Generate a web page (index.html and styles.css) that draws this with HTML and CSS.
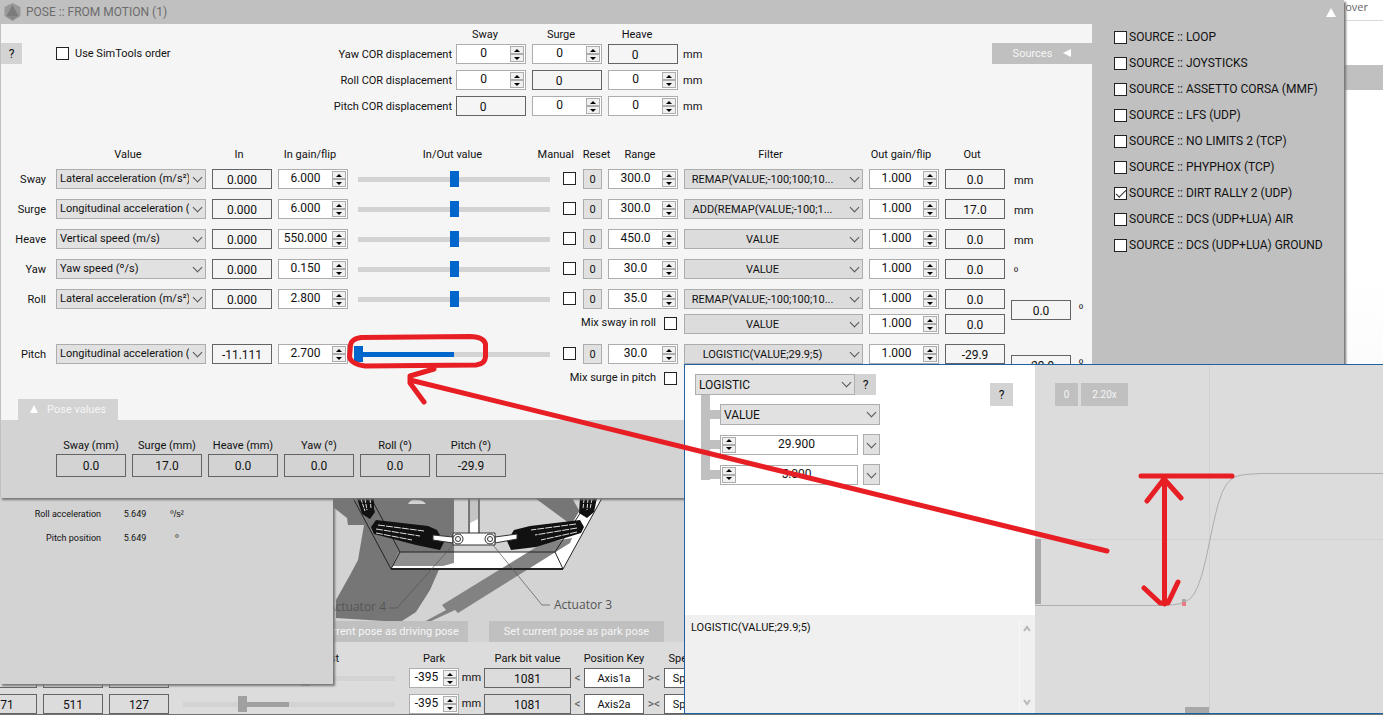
FILE: index.html
```
<!DOCTYPE html>
<html lang="en">
<head>
<meta charset="utf-8">
<title>Pose from motion</title>
<link rel="stylesheet" href="styles.css">
</head>
<body>
<main class="desktop">

  <div class="backdrop"><div class="backdrop-tab">over</div><div class="backdrop-band"></div></div>

  <section class="rig">
    <svg class="rig-view" viewBox="333 498 352 144" aria-label="Rig view">
      <path fill="#767676" d="M367 498H454V562L441 565 430 590 416 612 402 621H384L336 618V600L350 575 358 560 364 525H348L347 518 333 507V498Z"/>
      <path fill="#d3d3d3" d="M408 504q3-6 10-4 5 0 8 4z"/>
      <path fill="#767676" d="M535 498H572L584 519 573 526Z"/>
      <path fill="#fff" d="M400 552H555L602 473V498L563 569H391Z"/>
      <path fill="#8f8f8f" d="M398 552H454V563L443 566H392Z"/>
      <path fill="#828282" d="M543 543L572 538 570 543 458 613 455 610 427 623H422L446 610 442 605Z"/>
      <g fill="none" stroke="#222" stroke-width="1"><path d="M353 498L391 569 400 552 371 498M400 552H555L590 498M555 552L563 569M602 498L563 569"/><path stroke-width="2" d="M391 569H563"/></g>
      <path fill="#c4c4c4" stroke="#222" d="M469 498V534H479V498"/><path d="M470 523l8-4v15h-8z" fill="#fff"/>
      <path fill="#111" d="M357 498H374V509L375 512 370 519 362 514ZM580 498H597L594 512 587 518 579 513Z"/>
      <path stroke="#ddd" stroke-dasharray="4 1" d="M361 499l4 12M365 499l2 11M370 499l1 9M584 499l-1 10M588 499l-1 11M592 499l-2 10"/>
      <path fill="#111" d="M376 520L428 526 437 530 444 542 440 550 416 545 374 534 371 527ZM580 520L530 526 514 530 507 541 511 550 536 547 581 533 584 527Z"/>
      <g stroke="#ddd" fill="none" stroke-dasharray="7 1"><path d="M378 525l46 6M376 529l44 7M376 533l36 7"/><path d="M576 524l-45 6M577 528l-42 7M577 532l-36 8"/></g>
      <g stroke="#333" stroke-width="1" fill="#fff"><path d="M433 535l20 2v6l-20-3zM517 534l-22 3v6l22-4z"/><path d="M453 533h42v12h-42z"/><circle cx="458" cy="539" r="5"/><circle cx="490" cy="539" r="5"/><circle cx="458" cy="539" r="2.5"/><circle cx="490" cy="539" r="2.5"/></g>
      <path d="M453 545L397 608H389M493 545L542 605H550" fill="none" stroke="#555" stroke-width=".7"/>
      <text x="386" y="611" text-anchor="end" class="rig-label">Actuator 4</text>
      <text x="554" y="609" class="rig-label">Actuator 3</text>
    </svg>
    <div class="rig-actions"><button>Set current pose as driving pose</button><button>Set current pose as park pose</button></div>
    <div class="axis-grid">
      <span></span><span></span><span></span><span class="test-head">Test</span><span>Park</span><span></span><span>Park bit value</span><span></span><span>Position Key</span><span></span><span>Speed Key</span>

      <output class="box"></output><output class="box"></output><output class="box"></output>
      <input class="test-slider" type="range" value="58" aria-label="Axis 1 test">
      <span class="spin"><input value="-395" aria-label="Axis 1 park"><span class="ud"><button aria-label="Up"></button><button aria-label="Down"></button></span></span><span>mm</span>
      <output class="box">1081</output><span class="mark">&lt;</span><input class="key" value="Axis1a" aria-label="Axis 1 key"><span class="mark">&gt;&lt;</span><input class="key" value="Speed1a" aria-label="Axis 1 speed">

      <output class="box">71</output><output class="box">511</output><output class="box">127</output>
      <input class="test-slider filled" type="range" value="27" aria-label="Axis 2 test">
      <span class="spin"><input value="-395" aria-label="Axis 2 park"><span class="ud"><button aria-label="Up"></button><button aria-label="Down"></button></span></span><span>mm</span>
      <output class="box">1081</output><span class="mark">&lt;</span><input class="key" value="Axis2a" aria-label="Axis 2 key"><span class="mark">&gt;&lt;</span><input class="key" value="Speed2a" aria-label="Axis 2 speed">
    </div>
  </section>

  <section class="telemetry">
    <span>Roll acceleration</span><span>5.649</span><span class="deg">º/s²</span>
    <span>Pitch position</span><span>5.649</span><span class="deg">º</span>
  </section>

  <section class="window">
    <header class="titlebar">
      <svg class="logo" viewBox="0 0 16 18"><path fill="#989898" d="M8 0l8 4v9l-8 5-8-5V4z"/><path fill="#7b7b7b" d="M8 2l6 11H2z"/><path fill="#888" d="M2 13h12l-6 4z"/></svg>
      <h1>POSE :: FROM MOTION (1)</h1>
      <button class="collapse" aria-label="Collapse"><svg viewBox="0 0 10 9"><path fill="#fff" d="M5 0l5 9H0z"/></svg></button>
    </header>
    <div class="window-body">
      <div class="form">
        <div class="top">
          <button class="help">?</button>
          <label class="order"><input type="checkbox">Use SimTools order</label>
          <div class="cor">
            <span></span><b>Sway</b><b>Surge</b><b>Heave</b><span></span>
            <span>Yaw COR displacement</span>
            <span class="spin"><input value="0" aria-label="Yaw sway"><span class="ud"><button aria-label="Up"></button><button aria-label="Down"></button></span></span>
            <span class="spin"><input value="0" aria-label="Yaw surge"><span class="ud"><button aria-label="Up"></button><button aria-label="Down"></button></span></span>
            <output class="box">0</output><span>mm</span>
            <span>Roll COR displacement</span>
            <span class="spin"><input value="0" aria-label="Roll sway"><span class="ud"><button aria-label="Up"></button><button aria-label="Down"></button></span></span>
            <output class="box">0</output>
            <span class="spin"><input value="0" aria-label="Roll heave"><span class="ud"><button aria-label="Up"></button><button aria-label="Down"></button></span></span><span>mm</span>
            <span>Pitch COR displacement</span>
            <output class="box">0</output>
            <span class="spin"><input value="0" aria-label="Pitch surge"><span class="ud"><button aria-label="Up"></button><button aria-label="Down"></button></span></span>
            <span class="spin"><input value="0" aria-label="Pitch heave"><span class="ud"><button aria-label="Up"></button><button aria-label="Down"></button></span></span><span>mm</span>
          </div>
          <button class="sources-toggle">Sources<svg viewBox="0 0 8 8"><path fill="#fff" d="M8 0v8L0 4z"/></svg></button>
        </div>

        <div class="motion">
          <b></b><b>Value</b><b>In</b><b>In gain/flip</b><b>In/Out value</b><b class="manual">Manual</b><b class="reset-head">Reset</b><b>Range</b><b>Filter</b><b>Out gain/flip</b><b>Out</b><b></b><b></b>

          <span class="name">Sway</span>
          <span class="sel"><select aria-label="Sway value"><option>Lateral acceleration (m/s²)</option></select></span>
          <output class="box">0.000</output>
          <span class="spin"><input value="6.000" aria-label="Sway in gain"><span class="ud"><button aria-label="Up"></button><button aria-label="Down"></button></span></span>
          <input type="range" class="slider" aria-label="Sway in/out">
          <input type="checkbox" aria-label="Sway manual"><button class="reset">0</button>
          <span class="spin"><input value="300.0" aria-label="Sway range"><span class="ud"><button aria-label="Up"></button><button aria-label="Down"></button></span></span>
          <span class="sel filter"><select aria-label="Sway filter"><option>REMAP(VALUE;-100;100;10...</option></select></span>
          <span class="spin"><input value="1.000" aria-label="Sway out gain"><span class="ud"><button aria-label="Up"></button><button aria-label="Down"></button></span></span>
          <output class="box">0.0</output><span class="unit">mm</span><span></span>

          <span class="name">Surge</span>
          <span class="sel"><select aria-label="Surge value"><option>Longitudinal acceleration (m/s²)</option></select></span>
          <output class="box">0.000</output>
          <span class="spin"><input value="6.000" aria-label="Surge in gain"><span class="ud"><button aria-label="Up"></button><button aria-label="Down"></button></span></span>
          <input type="range" class="slider" aria-label="Surge in/out">
          <input type="checkbox" aria-label="Surge manual"><button class="reset">0</button>
          <span class="spin"><input value="300.0" aria-label="Surge range"><span class="ud"><button aria-label="Up"></button><button aria-label="Down"></button></span></span>
          <span class="sel filter"><select aria-label="Surge filter"><option>ADD(REMAP(VALUE;-100;1...</option></select></span>
          <span class="spin"><input value="1.000" aria-label="Surge out gain"><span class="ud"><button aria-label="Up"></button><button aria-label="Down"></button></span></span>
          <output class="box">17.0</output><span class="unit">mm</span><span></span>

          <span class="name">Heave</span>
          <span class="sel"><select aria-label="Heave value"><option>Vertical speed (m/s)</option></select></span>
          <output class="box">0.000</output>
          <span class="spin"><input value="550.000" aria-label="Heave in gain"><span class="ud"><button aria-label="Up"></button><button aria-label="Down"></button></span></span>
          <input type="range" class="slider" aria-label="Heave in/out">
          <input type="checkbox" aria-label="Heave manual"><button class="reset">0</button>
          <span class="spin"><input value="450.0" aria-label="Heave range"><span class="ud"><button aria-label="Up"></button><button aria-label="Down"></button></span></span>
          <span class="sel filter"><select aria-label="Heave filter"><option>VALUE</option></select></span>
          <span class="spin"><input value="1.000" aria-label="Heave out gain"><span class="ud"><button aria-label="Up"></button><button aria-label="Down"></button></span></span>
          <output class="box">0.0</output><span class="unit">mm</span><span></span>

          <span class="name">Yaw</span>
          <span class="sel"><select aria-label="Yaw value"><option>Yaw speed (º/s)</option></select></span>
          <output class="box">0.000</output>
          <span class="spin"><input value="0.150" aria-label="Yaw in gain"><span class="ud"><button aria-label="Up"></button><button aria-label="Down"></button></span></span>
          <input type="range" class="slider" aria-label="Yaw in/out">
          <input type="checkbox" aria-label="Yaw manual"><button class="reset">0</button>
          <span class="spin"><input value="30.0" aria-label="Yaw range"><span class="ud"><button aria-label="Up"></button><button aria-label="Down"></button></span></span>
          <span class="sel filter"><select aria-label="Yaw filter"><option>VALUE</option></select></span>
          <span class="spin"><input value="1.000" aria-label="Yaw out gain"><span class="ud"><button aria-label="Up"></button><button aria-label="Down"></button></span></span>
          <output class="box">0.0</output><span class="unit deg">º</span><span></span>

          <span class="name">Roll</span>
          <span class="sel"><select aria-label="Roll value"><option>Lateral acceleration (m/s²)</option></select></span>
          <output class="box">0.000</output>
          <span class="spin"><input value="2.800" aria-label="Roll in gain"><span class="ud"><button aria-label="Up"></button><button aria-label="Down"></button></span></span>
          <input type="range" class="slider" aria-label="Roll in/out">
          <input type="checkbox" aria-label="Roll manual"><button class="reset">0</button>
          <span class="spin"><input value="35.0" aria-label="Roll range"><span class="ud"><button aria-label="Up"></button><button aria-label="Down"></button></span></span>
          <span class="sel filter"><select aria-label="Roll filter"><option>REMAP(VALUE;-100;100;10...</option></select></span>
          <span class="spin"><input value="1.000" aria-label="Roll out gain"><span class="ud"><button aria-label="Up"></button><button aria-label="Down"></button></span></span>
          <output class="box">0.0</output><output class="box sum">0.0</output><span class="sum deg">º</span>

          <label class="mix">Mix sway in roll<input type="checkbox"></label>
          <span class="sel filter"><select aria-label="Roll mix filter"><option>VALUE</option></select></span>
          <span class="spin"><input value="1.000" aria-label="Roll mix gain"><span class="ud"><button aria-label="Up"></button><button aria-label="Down"></button></span></span>
          <output class="box">0.0</output>

          <span class="name">Pitch</span>
          <span class="sel"><select aria-label="Pitch value"><option>Longitudinal acceleration (m/s²)</option></select></span>
          <output class="box">-11.111</output>
          <span class="spin"><input value="2.700" aria-label="Pitch in gain"><span class="ud"><button aria-label="Up"></button><button aria-label="Down"></button></span></span>
          <input type="range" class="slider low" value="0" aria-label="Pitch in/out">
          <input type="checkbox" aria-label="Pitch manual"><button class="reset">0</button>
          <span class="spin"><input value="30.0" aria-label="Pitch range"><span class="ud"><button aria-label="Up"></button><button aria-label="Down"></button></span></span>
          <span class="sel filter"><select aria-label="Pitch filter"><option>LOGISTIC(VALUE;29.9;5)</option></select></span>
          <span class="spin"><input value="1.000" aria-label="Pitch out gain"><span class="ud"><button aria-label="Up"></button><button aria-label="Down"></button></span></span>
          <output class="box">-29.9</output><output class="box sum">-29.9</output><span class="sum deg">º</span>

          <label class="mix">Mix surge in pitch<input type="checkbox"></label>
        </div>

        <button class="pose-tab"><svg viewBox="0 0 8 8"><path fill="#fff" d="M4 0l4 8H0z"/></svg>Pose values</button>
        <div class="pose">
          <label>Sway (mm)<output class="box">0.0</output></label>
          <label>Surge (mm)<output class="box">17.0</output></label>
          <label>Heave (mm)<output class="box">0.0</output></label>
          <label>Yaw (º)<output class="box">0.0</output></label>
          <label>Roll (º)<output class="box">0.0</output></label>
          <label>Pitch (º)<output class="box">-29.9</output></label>
        </div>
      </div>
      <div class="sources">
        <label><input type="checkbox">SOURCE :: LOOP</label>
        <label><input type="checkbox">SOURCE :: JOYSTICKS</label>
        <label><input type="checkbox">SOURCE :: ASSETTO CORSA (MMF)</label>
        <label><input type="checkbox">SOURCE :: LFS (UDP)</label>
        <label><input type="checkbox">SOURCE :: NO LIMITS 2 (TCP)</label>
        <label><input type="checkbox">SOURCE :: PHYPHOX (TCP)</label>
        <label><input type="checkbox" checked>SOURCE :: DIRT RALLY 2 (UDP)</label>
        <label><input type="checkbox">SOURCE :: DCS (UDP+LUA) AIR</label>
        <label><input type="checkbox">SOURCE :: DCS (UDP+LUA) GROUND</label>
      </div>
    </div>
  </section>

  <section class="editor">
    <div class="expression">
      <div class="builder">
        <div class="nodes">
          <div class="root"><span class="sel"><select aria-label="Function"><option>LOGISTIC</option></select></span><button class="help">?</button></div>
          <div class="tree">
            <div class="node"><i></i><span class="sel"><select aria-label="Argument 1"><option>VALUE</option></select></span></div>
            <div class="node"><i></i><span class="spin left"><span class="ud"><button aria-label="Up"></button><button aria-label="Down"></button></span><input value="29.900" aria-label="Argument 2"></span><button class="drop" aria-label="Replace argument 2"></button></div>
            <div class="node"><i></i><span class="spin left"><span class="ud"><button aria-label="Up"></button><button aria-label="Down"></button></span><input value="5.000" aria-label="Argument 3"></span><button class="drop" aria-label="Replace argument 3"></button></div>
          </div>
        </div>
        <button class="help large">?</button>
      </div>
      <div class="source-text">
        <textarea aria-label="Expression">LOGISTIC(VALUE;29.9;5)</textarea>
        <svg class="scroll" viewBox="0 0 16 90"><path d="M0 0V90" stroke="#fff"/><path d="M5 11l3-4 3 4M5 80l3 4 3-4" fill="none" stroke="#b8b8b8" stroke-width="2"/></svg>
      </div>
    </div>
    <div class="graph">
      <svg class="plot" viewBox="1035 365 348 348" preserveAspectRatio="xMinYMin slice" aria-label="Logistic curve">
        <path d="M1209.500 365V713M1035 539.500H1383" stroke="#d0d0d0"/>
        <path fill="#a8a8a8" d="M1035 539h6v65h-6zM1185 707h24v6h-24zM1182 599h4v3h-4z"/>
        <polyline fill="none" stroke="#adadad" points="1035,605.500 1160,605.500 1172,605 1180,603.700 1185,602 1190,598.800 1194,594 1198,586 1202,574.500 1206,558.500 1210,539.500 1214,520.500 1218,504.500 1222,492.800 1226,485 1230,480.200 1235,477 1240,475.300 1248,474.300 1262,473.500 1383,473.500"/>
        <path fill="#e87c80" d="M1182 602h4v4h-4z"/>
      </svg>
      <div class="graph-tools"><button>0</button><button>2.20x</button></div>
    </div>
  </section>

  <svg class="ink" viewBox="0 0 1383 715" aria-hidden="true">
    <g fill="none" stroke="#e81e25" stroke-width="5" stroke-linecap="round" stroke-linejoin="round">
      <path d="M361 337.500L470 336.500Q484 337 485.500 344V357Q485 364 476 365L365 366Q351 364 349.500 357L350.500 345Q351 339 361 337.500Z"/>
      <path d="M434 369L410 376V383L424 402M410 380L1107 551"/>
      <path d="M1141 476H1232M1164.500 480V604M1147 501L1164 479 1181 498M1144 588L1160 603H1168L1178 582"/>
    </g>
  </svg>
</main>
</body>
</html>
```
FILE: styles.css
```
* { box-sizing: border-box; }
body { margin: 0; }
body, button, input, select, textarea {
  font-family: Roboto, sans-serif;
  font-size: 11px;
  line-height: 16px;
  color: #111;
}
button { border: 0; padding: 0; white-space: nowrap; }
b { font-weight: normal; white-space: nowrap; }
.desktop { position: relative; height: 100vh; min-height: 715px; overflow: hidden; background: #6c7478; }

.backdrop { height: 714px; background: linear-gradient(#fff 270px, #f0f0f0); }
.backdrop-tab { height: 21px; padding-right: 15px; border-bottom: 1px solid #d8d8d8; text-align: right; font: 11px/14px "Open Sans", sans-serif; color: #666; }
.backdrop-band { height: 25px; margin-top: 44px; background: #c0c0c0; }

/* shared controls */
.box {
  display: flex; align-items: center; justify-content: center;
  height: 20px; padding-top: 1px; border: 1px solid #646464; font-size: 12px;
}
.spin { display: flex; height: 20px; border: 1px solid #adadad; background: #fff; }
.spin input { flex: 1; min-width: 0; padding: 0 0 2px; border: 0; background: none; text-align: center; font-size: 12px; }
.ud { display: flex; flex-direction: column; width: 15px; padding: 1px 1px 1px 0; }
.ud button { display: flex; flex: 1; align-items: center; justify-content: center; border: 1px solid #adadad; background: #f0f0f0; }
.ud button::before { content: ""; border: 3px solid transparent; border-top: 0; border-bottom-color: #000; }
.ud button:last-child::before { border-top: 3px solid #000; border-bottom: 0; }
.left .ud { padding: 1px 0 1px 1px; }
.sel { display: flex; position: relative; height: 20px; }
.sel select { flex: 1; min-width: 0; padding: 0 16px 0 3px; appearance: none; border: 1px solid #adadad; border-radius: 0; background: #e1e1e1; }
.sel::after, .drop::after { content: ""; width: 6px; height: 6px; border: solid #555; border-width: 0 1px 1px 0; transform: rotate(45deg); }
.sel::after { position: absolute; right: 5px; top: 5px; pointer-events: none; }
.sel.filter select { background: #dcdcdc; text-align-last: center; padding: 1px 22px 0 0; }
input[type="checkbox"] { appearance: none; flex: none; width: 13px; height: 13px; margin: 0; border: 1px solid #222; background: #fff; }
input[type="checkbox"]:checked::before { content: ""; display: block; width: 9px; height: 4px; margin: 2px 1px; border: solid #333; border-width: 0 0 1px 1px; transform: rotate(-45deg); }
.help { width: 21px; height: 21px; background: #d3d3d3; font-size: 12px; }
.help.large { width: 23px; height: 23px; }
.deg { font-family: "Liberation Sans", sans-serif; }

/* main window */
.window { position: absolute; top: 0; left: 0; right: 39px; height: 498px; background: #f5f5f5; box-shadow: 2px 2px 2px #777; display: flex; flex-direction: column; }
.titlebar { display: flex; align-items: center; height: 24px; padding: 0 8px 0 4px; background: #c0c0c0; }
.logo { width: 17px; height: 18px; }
.titlebar h1 { flex: 1; margin: 0 0 0 5px; font-size: 12px; font-weight: normal; color: #6c6c6c; }
.collapse { width: 10px; height: 9px; background: none; }
.collapse svg { display: block; }
.window-body { display: flex; flex: 1; }
.form { flex: 1; min-width: 0; display: flex; flex-direction: column; border-left: 1px solid #c0c0c0; }
.top { display: flex; align-items: flex-start; height: 121px; padding-top: 3px; }
.top .help, .sources-toggle, .order { margin-top: 16px; }
.order { display: flex; align-items: center; gap: 6px; height: 21px; margin-left: 34px; }
.cor { display: grid; grid-template-columns: auto 70px 70px 70px 308px; grid-template-rows: 11px; gap: 6px; margin-left: auto; align-items: center; text-align: right; }
.cor b { padding: 4px 12px 0 0; text-align: center; }
.cor > span:nth-child(5n+1) { padding-top: 2px; margin-right: -2px; }
.cor > span:nth-child(5n) { padding-top: 2px; margin-left: -1px; text-align: left; }
.cor .box { padding-right: 16px; }
.sources-toggle { width: 100px; height: 21px; background: #c0c0c0; color: #f5f5f5; }
.sources-toggle svg { width: 8px; margin-left: 11px; }

.motion {
  display: grid; gap: 5px 6px; align-items: start;
  grid-template-columns: 49px 150px 60px 70px minmax(120px, 1fr) 14px 19px 70px 179px 70px 60px 60px 15px;
  grid-template-rows: 19px 25px 25px 25px 25px 20px 25px 20px;
}
.motion b { justify-self: center; padding: 2px 6px 0 0; }
.motion .manual { justify-self: end; padding-right: 3px; }
.motion .reset-head { padding: 2px 0 0 8px; }
.name { padding: 3px 4px 0 0; text-align: right; }
.motion input[type="checkbox"] { margin-top: 3px; }
.reset { height: 20px; padding-top: 1px; border: 1px solid #adadad; background: #e1e1e1; }
.unit { padding: 4px 0 0 3px; }
.sum { grid-row: span 2; margin-top: 11px; }
span.sum { padding-left: 2px; }
.mix { grid-column: 1 / 9; display: flex; justify-content: flex-end; gap: 8px; padding-top: 1px; }
.motion .mix input { margin: 2px 1px 0 0; }
.slider, .test-slider { appearance: none; height: 20px; margin: 0; }
.slider { width: calc(100% - 3px); background: linear-gradient(#d3d3d3, #d3d3d3) center / calc(100% - 8px) 5px no-repeat; }
.slider::-webkit-slider-thumb { appearance: none; width: 9px; height: 16px; background: #0066cc; }
.slider.low { background-image: linear-gradient(90deg, #0066cc 50%, #d3d3d3 50%); }

.pose-tab { width: 100px; height: 21px; margin: auto 0 0 17px; flex: none; background: #d3d3d3; color: #f5f5f5; }
.pose-tab svg { width: 8px; margin-right: 9px; }
.pose { display: flex; flex: none; gap: 6px; height: 78px; padding: 18px 55px 0; background: #d3d3d3; }
.pose label { display: flex; flex-direction: column; width: 70px; text-align: center; white-space: nowrap; }
.pose .box { height: 23px; }
.sources { width: 252px; padding: 5px 22px 0; background: #c0c0c0; }
.sources label { display: flex; align-items: center; gap: 2px; height: 16px; margin-bottom: 10px; white-space: nowrap; font-size: 12px; }

/* telemetry panel */
.telemetry { position: absolute; left: 0; top: 490px; width: 333px; height: 194px; background: #d3d3d3; box-shadow: 2px 2px 2px #777; display: grid; grid-template-columns: 101px 24px 16px; grid-auto-rows: 14px; gap: 10px 22px; padding-top: 17px; align-content: start; text-align: center; font-size: 9px; line-height: 14px; }
.telemetry > span:nth-child(3n+1) { text-align: right; }

/* rig window */
.rig { position: absolute; left: 0; top: 498px; width: 700px; height: 216px; background: #dcdcdc; overflow: hidden; }
.rig-view { display: block; width: 352px; height: 144px; margin-left: 333px; background: #d3d3d3; }
.rig-label { font: 12px "Open Sans", sans-serif; fill: #555; }
.rig-actions { display: flex; position: absolute; left: 293px; top: 123px; gap: 21px; }
.rig-actions button { width: 175px; height: 21px; background: #c0c0c0; color: #f5f5f5; }
.axis-grid { display: grid; gap: 6px; grid-template-columns: 60px 60px 60px 228px 50px 13px 87px 1px 60px 8px 60px; grid-template-rows: 10px; align-items: center; margin: 10px 0 0 -23px; white-space: nowrap; }
.axis-grid > span { display: flex; justify-content: center; }
.axis-grid > span:nth-child(-n+11) { padding-top: 4px; }
.axis-grid > .test-head { justify-content: flex-end; padding-right: 64px; }
.axis-grid > .mark { color: #555; font-size: 12px; }
.test-slider { width: 212px; margin-left: 8px; background: linear-gradient(#d3d3d3, #d3d3d3) center / 100% 5px no-repeat; }
.test-slider::-webkit-slider-thumb { appearance: none; width: 9px; height: 16px; background: #a0a0a0; }
.test-slider.filled { background-image: linear-gradient(90deg, #d3d3d3 27%, #a0a0a0 27% 50%, #d3d3d3 50%); }
.key { width: 60px; height: 20px; padding: 0; border: 1px solid #646464; background: #fff; text-align: center; }

/* expression editor */
.editor { position: absolute; left: 684px; right: -1px; top: 364px; height: 350px; border: 1px solid #1d62a5; background: #fff; display: flex; }
.expression { width: 350px; flex: none; display: flex; flex-direction: column; }
.builder { display: flex; flex: 1; justify-content: space-between; align-items: flex-start; padding: 9px 22px 0 10px; }
.builder .large { margin-top: 9px; }
.builder .sel { width: 160px; height: 21px; }
.builder select { font-size: 12px; }
.root { display: flex; }
.tree { width: 185px; height: 85px; margin-left: 6px; padding-top: 9px; border-left: 9px solid #c0c0c0; display: flex; flex-direction: column; gap: 9px; }
.node { display: flex; flex: none; align-items: center; height: 21px; }
.node i { width: 10px; height: 9px; background: #c0c0c0; }
.node .spin { width: 138px; }
.drop { display: flex; justify-content: center; width: 17px; height: 21px; margin-left: 5px; padding-top: 5px; border: 1px solid #adadad; background: #e1e1e1; }
.source-text { display: flex; height: 98px; padding: 5px 0 2px 6px; background: #f0f0f0; }
.source-text textarea { flex: 1; padding: 0; border: 0; outline: 0; resize: none; background: none; }
.scroll { width: 16px; height: 90px; }
.graph { position: relative; flex: 1; background: #dcdcdc; overflow: hidden; }
.plot { position: absolute; left: 0; top: 0; width: 348px; height: 348px; }
.graph-tools { position: relative; display: flex; gap: 3px; padding: 18px 20px; }
.graph-tools button { width: 23px; height: 23px; background: #c0c0c0; color: #f5f5f5; font-size: 10px; }
.graph-tools button:last-child { width: 47px; }

.ink { position: absolute; left: 0; top: 0; width: 1383px; height: 715px; pointer-events: none; }
```
